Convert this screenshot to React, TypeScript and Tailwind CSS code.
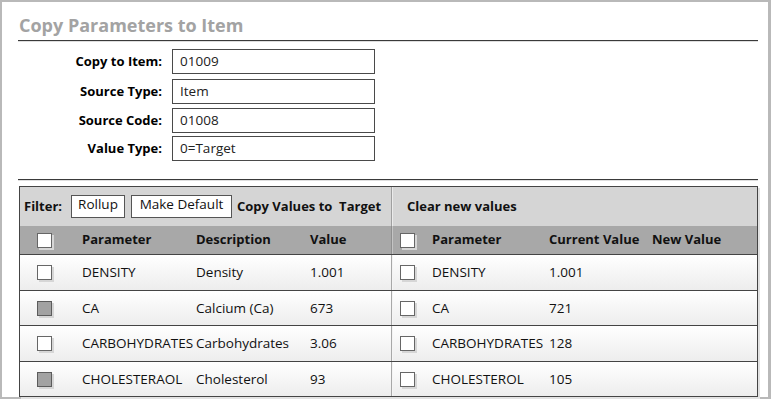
import React from "react"

type Row = {
  param: string
  desc: string
  value: string
  checked: boolean
  current: string
  h: string
}

const rows: Row[] = [
  { param: "DENSITY", desc: "Density", value: "1.001", checked: false, current: "1.001", h: "h-[36px]" },
  { param: "CA", desc: "Calcium (Ca)", value: "673", checked: true, current: "721", h: "h-[35px]" },
  { param: "CARBOHYDRATES", desc: "Carbohydrates", value: "3.06", checked: false, current: "128", h: "h-[36px]" },
  { param: "CHOLESTERAOL", desc: "Cholesterol", value: "93", checked: true, current: "105", h: "h-[35px]" },
]

const rightNames = ["DENSITY", "CA", "CARBOHYDRATES", "CHOLESTEROL"]

const Box = ({ filled = false }: { filled?: boolean }) => (
  <div
    className={`w-[15px] h-[15px] border shadow-[2px_2px_0_#d6d6d6] ${
      filled ? "bg-[#a2a2a2] border-[#5c5c5c]" : "bg-white border-[#666666]"
    }`}
  />
)

const Field = ({ label, value, mt }: { label: string; value: string; mt: string }) => (
  <div className={`flex items-center ${mt}`}>
    <div className="w-[144px] text-right font-bold text-[13px] text-black">{label}</div>
    <div className="ml-[10px] w-[203px] h-[25px] border border-[#4a4a4a] pl-[7px] flex items-center text-[13.5px] text-[#222]">
      {value}
    </div>
  </div>
)

export default function App() {
  return (
    <div className="w-[771px] h-[399px] border-2 border-r-[3px] border-[#b9b9b9] bg-white pl-4 pr-[10px] font-['Open_Sans',sans-serif] text-[#111]">
      <div className="h-[39px] border-b border-[#3a3a3a] pt-[11px] pl-[1px] text-[18px] leading-[24px] font-bold text-[#a3a3a3] shadow-[0_1px_0_#dedede]">
        Copy Parameters to Item
      </div>

      <div className="mt-[8px]">
        <Field label="Copy to Item:" value="01009" mt="" />
        <Field label="Source Type:" value="Item" mt="mt-[5px]" />
        <Field label="Source Code:" value="01008" mt="mt-[4px]" />
        <Field label="Value Type:" value="0=Target" mt="mt-[3px]" />
      </div>

      <div className="mt-[18px] h-px bg-[#3a3a3a] shadow-[0_1px_0_#dedede]" />

      <div className="mt-[6px] ml-px w-[739px] border border-[#444444] shadow-[2px_2px_0_#e2e2e2] text-[13.5px]">
        {/* filter bar */}
        <div className="flex h-[39px] bg-[#d5d5d5]">
          <div className="w-[372px] border-r border-[#a0a0a0] flex items-center pl-[4px] font-bold text-[13px]">
            <span className="w-[47px]">Filter:</span>
            <span className="w-[54px] h-[23px] border border-[#555555] bg-white font-normal text-[13.5px] leading-[17px] text-center">
              Rollup
            </span>
            <span className="ml-[6px] w-[101px] h-[23px] border border-[#555555] bg-white font-normal text-[13.5px] leading-[17px] text-center">
              Make Default
            </span>
            <span className="ml-[5px] whitespace-pre">Copy Values to  Target</span>
          </div>
          <div className="flex-1 border-l border-[#ebebeb] flex items-center pl-[14px] font-bold text-[13px]">
            Clear new values
          </div>
        </div>

        {/* header */}
        <div className="flex h-[28px] bg-[#a8a8a8] font-bold text-[13px]">
          <div className="w-[372px] border-r border-[#8f8f8f] flex items-center pl-[17px]">
            <div className="w-[45px]">
              <Box />
            </div>
            <div className="w-[114px]">Parameter</div>
            <div className="w-[114px]">Description</div>
            <div>Value</div>
          </div>
          <div className="flex-1 border-l border-[#c4c4c4] flex items-center pl-[7px]">
            <div className="w-[32px]">
              <Box />
            </div>
            <div className="w-[117px]">Parameter</div>
            <div className="w-[103px] whitespace-nowrap">Current Value</div>
            <div>New Value</div>
          </div>
        </div>

        {/* rows */}
        {rows.map((r, i) => (
          <div key={r.param} className={`flex ${r.h} border-t border-[#444444] bg-linear-to-b from-white to-[#ededed]`}>
            <div className="w-[372px] border-r border-[#a8a8a8] flex items-center pl-[17px]">
              <div className="w-[45px]">
                <Box filled={r.checked} />
              </div>
              <div className="w-[114px] whitespace-nowrap">{r.param}</div>
              <div className="w-[114px] whitespace-nowrap">{r.desc}</div>
              <div>{r.value}</div>
            </div>
            <div className="flex-1 border-l border-[#f4f4f4] flex items-center pl-[7px]">
              <div className="w-[32px]">
                <Box />
              </div>
              <div className="w-[117px] whitespace-nowrap">{rightNames[i]}</div>
              <div className="w-[103px]">{r.current}</div>
              <div />
            </div>
          </div>
        ))}
      </div>
    </div>
  )
}
